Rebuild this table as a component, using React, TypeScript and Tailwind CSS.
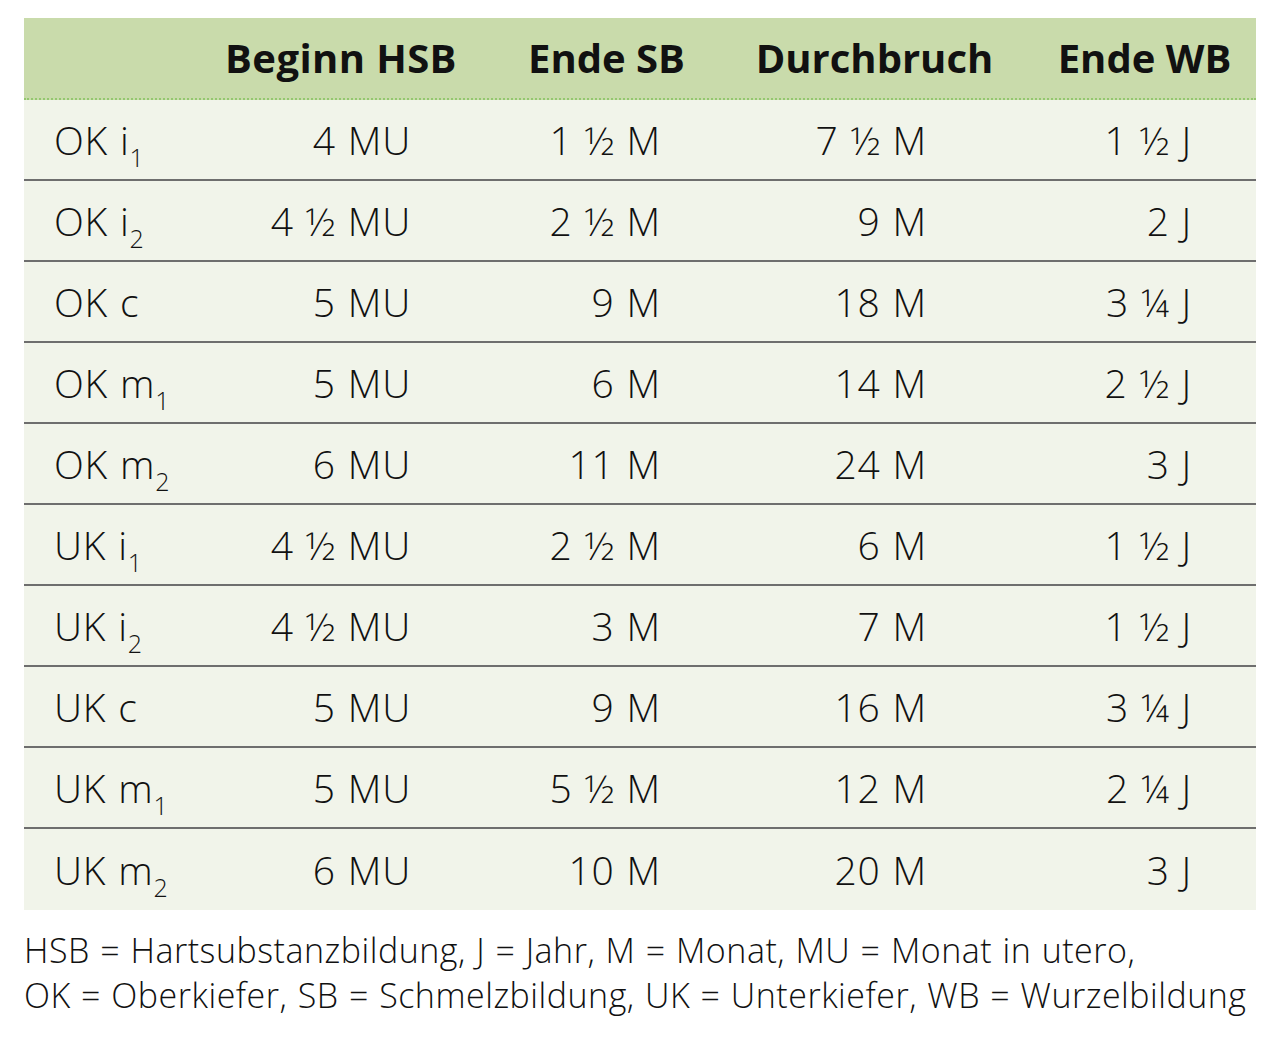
const rows: [string, string, string, string, string, string][] = [
  ["OK i", "1", "4 MU", "1 ½ M", "7 ½ M", "1 ½ J"],
  ["OK i", "2", "4 ½ MU", "2 ½ M", "9 M", "2 J"],
  ["OK c", "", "5 MU", "9 M", "18 M", "3 ¼ J"],
  ["OK m", "1", "5 MU", "6 M", "14 M", "2 ½ J"],
  ["OK m", "2", "6 MU", "11 M", "24 M", "3 J"],
  ["UK i", "1", "4 ½ MU", "2 ½ M", "6 M", "1 ½ J"],
  ["UK i", "2", "4 ½ MU", "3 M", "7 M", "1 ½ J"],
  ["UK c", "", "5 MU", "9 M", "16 M", "3 ¼ J"],
  ["UK m", "1", "5 MU", "5 ½ M", "12 M", "2 ¼ J"],
  ["UK m", "2", "6 MU", "10 M", "20 M", "3 J"],
];

const grid = "grid grid-cols-[185px_264px_267px_269px_247px]";

export default function App() {
  return (
    <div className="w-[1280px] h-[1052px] bg-white pt-[18px] px-[24px] text-[#111] font-['Open_Sans',sans-serif]">
      <div className={`${grid} h-[82px] items-center bg-[#c9dbab] border-b-2 border-dotted border-[#94c76f] text-[40px] font-bold leading-none`}>
        <div />
        <div className="text-center tracking-[0.01em]">Beginn HSB</div>
        <div className="text-center">Ende SB</div>
        <div className="text-center">Durchbruch</div>
        <div className="text-center pl-[24px]">Ende WB</div>
      </div>
      {rows.map((r, i) => (
        <div
          key={i}
          className={`${grid} h-[81px] items-center bg-[#f1f4ea] text-[39px] font-light leading-none tracking-[0.02em] [word-spacing:1px] ${i < rows.length - 1 ? "border-b-2 border-[#6e6e6e]" : ""}`}
        >
          <div className="pl-[30px]">
            {r[0]}
            {r[1] && <span className="relative top-[12px] text-[25px]">{r[1]}</span>}
          </div>
          <div className="text-right pr-[62px]">{r[2]}</div>
          <div className="text-right pr-[79px]">{r[3]}</div>
          <div className="text-right pr-[82px]">{r[4]}</div>
          <div className="text-right pr-[64px]">{r[5]}</div>
        </div>
      ))}
      <div className="mt-[18px] text-[34px] font-light leading-[45px] tracking-[0.015em] [word-spacing:1px]">
        <p>HSB = Hartsubstanzbildung, J = Jahr, M = Monat, MU = Monat in utero,</p>
        <p>OK = Oberkiefer, SB = Schmelzbildung, UK = Unterkiefer, WB = Wurzelbildung</p>
      </div>
    </div>
  );
}
